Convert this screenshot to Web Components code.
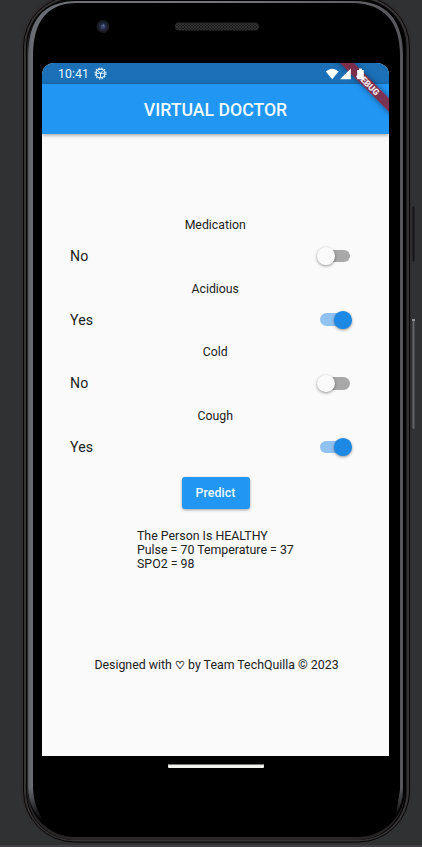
<!DOCTYPE html>
<html lang="en">
<head>
<meta charset="utf-8">
<title>Virtual Doctor</title>
<style>
html,body{margin:0;height:847px;overflow:hidden;background:#303133;font-family:Roboto,"Liberation Sans",sans-serif}
</style>
</head>
<body>
<phone-frame>
  <status-bar></status-bar>
  <app-bar>VIRTUAL DOCTOR</app-bar>
  <doctor-form>
    <symptom-row label="Medication">No</symptom-row>
    <symptom-row label="Acidious" on>Yes</symptom-row>
    <symptom-row label="Cold">No</symptom-row>
    <symptom-row label="Cough" on>Yes</symptom-row>
    <predict-button slot="action">Predict</predict-button>
    <result-text slot="result"></result-text>
    <credit-line slot="credit"></credit-line>
  </doctor-form>
</phone-frame>
<script>
function element(name, html, setup) {
  const t = document.createElement('template');
  t.innerHTML = html;
  customElements.define(name, class extends HTMLElement {
    constructor() {
      super();
      this.attachShadow({mode: 'open'}).append(t.content.cloneNode(true));
    }
    connectedCallback() { if (setup) setup(this, this.shadowRoot); }
  });
}

element('phone-frame', `
<style>
:host{display:block;position:relative;width:422px;height:847px;overflow:hidden}
.case{position:absolute;inset:0}
.screen{position:relative;box-sizing:border-box;width:347px;height:693px;margin:63px 0 0 42px;border-radius:12px 12px 0 0;overflow:hidden;background:#fafafa;display:flex;flex-direction:column}
.home{position:relative;width:96px;height:4px;margin:8px 0 0 168px;background:#f2f2f0;border-radius:1px;box-shadow:inset 0 1px #777}
.wrap{display:flow-root}
.banner{position:absolute;right:0;top:0;width:60px;height:60px;overflow:hidden;z-index:2}
.banner span{position:absolute;left:-11.2px;top:16.3px;width:100px;height:9.8px;line-height:10px;text-align:center;transform:rotate(45deg);background:rgba(139,35,56,.86);color:#f4e6ea;font-size:8.8px;font-weight:900;box-shadow:0 0 5px rgba(0,0,0,.5)}
</style>
<svg class="case" width="422" height="847" viewBox="0 0 422 847">
  <defs>
    <linearGradient id="rim" x1="0" x2="1" y1="0" y2="0"><stop offset="0" stop-color="#55585e"/><stop offset=".008" stop-color="#696c72"/><stop offset=".5" stop-color="#77777b"/><stop offset="1" stop-color="#57565a"/></linearGradient>
    <linearGradient id="fade" x1="0" x2="0" y1="0" y2="1"><stop offset=".93" stop-color="#fff"/><stop offset=".97" stop-color="#000"/></linearGradient>
    <mask id="m"><rect width="422" height="847" fill="url(#fade)"/></mask>
    <pattern id="mesh" width="3" height="3" patternUnits="userSpaceOnUse"><rect width="3" height="3" fill="#1c1c1c"/><path d="M0 0l3 3M3 0L0 3" stroke="#444" stroke-width=".5"/></pattern>
  </defs>
  <rect y="845" width="422" height="2" fill="#414145"/>
  <rect x="412" y="206" width="3" height="56" rx="1" fill="#19191b" stroke="#3b3b3c" stroke-width=".5"/>
  <rect x="412.5" y="319" width="2" height="110" rx="1" fill="#656568"/>
  <rect x="412" y="319" width="3" height="2" fill="#929294"/>
  <rect x="20.5" y="-7" width="391" height="849.5" rx="54" fill="#302d2e"/>
  <rect x="23.5" y="-4" width="386" height="846" rx="51" fill="#373435" stroke="#050505"/>
  <rect x="26" y="-1.5" width="380.5" height="841.5" rx="48" fill="#050505"/>
  <rect x="27" y="0" width="378" height="840" rx="48" fill="#292627"/>
  <rect x="28" y="0" width="377" height="837" rx="47" fill="#000"/>
  <path mask="url(#m)" fill="url(#rim)" fill-rule="evenodd" d="M28 56Q28 1 77 1H355Q403 2 403 56V790Q403 804 396 814L400 790V56Q400 5 354 3H77Q33 3 33 56V788Q34 811 47 825Q28 810 28 788Z"/>
  <circle cx="103" cy="26.5" r="6.5" fill="#191b20"/>
  <circle cx="103" cy="26.5" r="4.3" fill="#252a40"/>
  <circle cx="103" cy="26.5" r="2.2" fill="#3c4773"/>
  <circle cx="103.5" cy="25.5" r="1" fill="#6374a3"/>
  <rect x="175" y="22.5" width="84" height="8" rx="4" fill="url(#mesh)"/>
</svg>
<div class="wrap"><div class="screen"><slot></slot><div class="banner"><span>DEBUG</span></div></div><div class="home"></div></div>`);

element('status-bar', `
<style>
:host{display:flex;align-items:center;box-sizing:border-box;height:21px;padding:0 23px 0 16px;background:#1b70b7;color:#fff;flex:none}
span{font-size:12.3px;line-height:19px;padding-top:2px;letter-spacing:.05px;color:#e3f6ff}
svg{display:block}
.gear{margin:0 0 0 5px}
.icons{margin:0 0 0 auto;position:relative;z-index:3}
</style>
<span>10:41</span>
<svg class="gear" width="13" height="13" viewBox="0 0 13 13" fill="none" stroke="#e3f6ff"><circle cx="6.5" cy="6.5" r="4.4" stroke-width="1.3"/><circle cx="6.5" cy="6.5" r="5.5" stroke-width="1.1" stroke-dasharray="1.44 1.44"/><path d="M2.5 6.3h8M6.5 6.3v4.4M4.3 4l2.2 2.3 2.2-2.3" stroke-width="1"/></svg>
<svg class="icons" width="41" height="12" viewBox="0 0 41 12" fill="#fff"><path d="M.8 3.4Q7.2-1.7 13.6 3.4L7.2 11.2ZM25.8.5v10.7H15ZM32.2 2H34V.6h3V2h1.8v9.2h-6.6Z"/></svg>`);

element('app-bar', `
<style>
:host{display:flex;align-items:center;justify-content:center;box-sizing:border-box;height:50px;padding-top:2px;flex:none;background:#2196f3;color:#eefaff;font-size:17.67px;font-weight:500;line-height:20px;letter-spacing:0;box-shadow:0 1px 4px rgba(0,0,0,.4);position:relative}
</style><slot></slot>`);

element('doctor-form', `
<style>
:host{display:flex;flex-direction:column;align-items:center;flex:1;padding-top:84px;color:#222}
.rows{align-self:stretch;padding:0 36px 0 28px}
</style>
<div class="rows"><slot></slot></div><slot name="action"></slot><slot name="result"></slot><slot name="credit"></slot>`);

element('symptom-row', `
<style>
:host{display:block;height:63.7px}
.label{font-size:12.3px;line-height:15px;text-align:center;padding-left:7.4px;height:15px}
.row{display:flex;align-items:center;justify-content:space-between;height:46px}
.state{font-size:14.13px;line-height:18px;letter-spacing:.1px}
.track{width:30px;height:12.4px;border-radius:7px;background:#a8a8a8;display:flex;align-items:center;margin-right:3px}
.thumb{width:17.7px;height:17.7px;flex:none;border-radius:50%;background:#fafafa;margin-left:-3px;box-shadow:0 1px 3px rgba(0,0,0,.42)}
:host([on]) .track{background:#8fc2f1}
:host([on]) .thumb{background:#1e88e5;margin-left:14.4px}
</style>
<div class="label"></div><div class="row"><span class="state"><slot></slot></span><div class="track"><div class="thumb"></div></div></div>`,
(host, root) => { root.querySelector('.label').textContent = host.getAttribute('label'); });

element('predict-button', `
<style>
:host{display:flex;align-items:center;justify-content:center;width:68px;height:32px;margin-top:4.2px;border-radius:3px;background:#2196f3;color:#eefaff;font-size:12.37px;font-weight:500;letter-spacing:.05px;box-shadow:0 1px 3px rgba(0,0,0,.36)}
</style><slot></slot>`);

element('result-text', `
<style>
:host{display:block;width:157px;margin-top:20px;font-size:12.37px;line-height:14.2px;letter-spacing:0;white-space:nowrap}
</style><div>The Person Is HEALTHY</div><div>Pulse = 70 Temperature = 37</div><div>SPO2 = 98</div>`);

element('credit-line', `
<style>
:host{display:block;margin:86px 0 0 2px;font-size:12.37px;line-height:15px;white-space:nowrap}
.heart{font-size:11px;line-height:0;-webkit-text-stroke:.3px}
</style><div>Designed with <span class="heart">♡</span> by Team TechQuilla © 2023</div>`);
</script>
</body>
</html>
